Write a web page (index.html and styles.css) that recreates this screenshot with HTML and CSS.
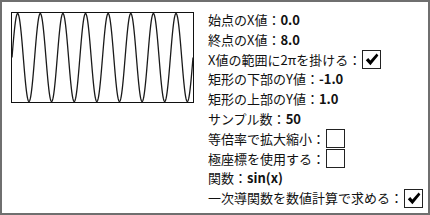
FILE: index.html
```html
<!DOCTYPE html>
<html lang="ja">
<head>
    <meta charset="UTF-8">
    <title>Plot</title>
    <link rel="stylesheet" href="styles.css">
</head>
<body>
    <div class="frame">
        <svg class="plot" width="183" height="91" viewBox="0 0 183 91">
            <rect x="0.5" y="0.5" width="182" height="90" fill="#fff" stroke="#111" stroke-width="1"/>
            <polyline id="wave" fill="none" stroke="#1a1a1a" stroke-width="1.3" points=""/>
        </svg>
        <div class="props">
            <div class="row">始点のX値：<b>0.0</b></div>
            <div class="row">終点のX値：<b>8.0</b></div>
            <div class="row">X値の範囲に2πを掛ける：<span class="box checked"></span></div>
            <div class="row">矩形の下部のY値：<b>-1.0</b></div>
            <div class="row">矩形の上部のY値：<b>1.0</b></div>
            <div class="row">サンプル数：<b>50</b></div>
            <div class="row">等倍率で拡大縮小：<span class="box"></span></div>
            <div class="row">極座標を使用する：<span class="box"></span></div>
            <div class="row">関数：<b>sin(x)</b></div>
            <div class="row">一次導関数を数値計算で求める：<span class="box checked"></span></div>
        </div>
    </div>

    <script>
        // sin(x) over 0..8*2pi drawn into the plot rect
        var pts = [];
        var w = 181, h = 89, n = 800;
        for (var i = 0; i <= n; i++) {
            var x = 8 * 2 * Math.PI * i / n;
            var px = 1 + w * i / n;
            var py = 1 + h / 2 - Math.sin(x) * (h / 2 - 0.5);
            pts.push(px.toFixed(2) + "," + py.toFixed(2));
        }
        document.getElementById("wave").setAttribute("points", pts.join(" "));

        // heavy check mark
        var mark = '<svg width="14" height="13" viewBox="0 0 14 13"><path d="M0.8 7.2 L3.2 4.9 L5.4 7.4 L11.6 0.6 L13.4 2.4 L5.4 12.2 Z" fill="#000"/></svg>';
        document.querySelectorAll(".box.checked").forEach(function (b) { b.innerHTML = mark; });
    </script>
</body>
</html>
```

FILE: styles.css
```css
body { margin: 0; background: #fff; }
.frame { width: 430px; height: 215px; box-sizing: border-box; border: 2px solid #6f6f6f; display: flex; align-items: flex-start; font-family: "Noto Sans CJK JP", "Noto Sans", sans-serif; font-size: 13px; color: #111; }
.plot { display: block; margin: 10px 0 0 9px; }
.props { margin-left: 14px; padding-top: 8px; }
.row { height: 19.8px; line-height: 19.8px; display: flex; align-items: center; white-space: nowrap; }
.row b { font-weight: bold; }
.box { display: inline-flex; align-items: center; justify-content: center; width: 17px; height: 17px; border: 1px solid #222; background: #fff; margin-left: 1px; }
```
